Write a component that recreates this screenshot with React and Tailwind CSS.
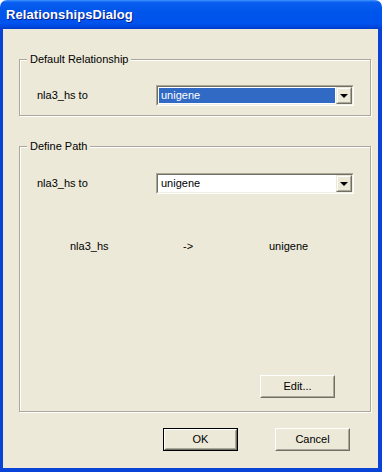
const font = "font-['Liberation_Sans',Arial,sans-serif]";

function Combo({ selected }) {
  return (
    <div className="w-[198px] h-[21px] border border-t-[#aca899] border-l-[#aca899] border-r-white border-b-white">
      <div className="h-full flex bg-white border border-t-[#716f64] border-l-[#716f64] border-r-[#f1efe2] border-b-[#f1efe2]">
        <div className="flex-1 p-px">
          <div
            className={`h-full flex items-center pl-[2px] text-[11px] leading-none ${
              selected ? 'bg-[#316ac5] text-white' : 'text-black'
            }`}
          >
            unigene
          </div>
        </div>
        <div className="w-[16px] h-full bg-[#ece9d8] border border-t-[#ece9d8] border-l-[#ece9d8] border-r-[#716f64] border-b-[#716f64]">
          <div className="h-full flex items-center justify-center border border-t-white border-l-white border-r-[#aca899] border-b-[#aca899]">
            <div className="w-0 h-0 border-l-[4px] border-r-[4px] border-t-[4px] border-l-transparent border-r-transparent border-t-black" />
          </div>
        </div>
      </div>
    </div>
  );
}

function Button({ children, isDefault }) {
  const face = (
    <div className="h-full flex items-center justify-center bg-[#ece9d8] border border-t-white border-l-white border-r-[#716f64] border-b-[#716f64] text-[11px] text-black">
      <div className="h-full w-full flex items-center justify-center border border-t-[#ece9d8] border-l-[#ece9d8] border-r-[#aca899] border-b-[#aca899]">
        {children}
      </div>
    </div>
  );
  if (isDefault) {
    return <div className="w-[75px] h-[23px] border border-black">{face}</div>;
  }
  return <div className="w-[75px] h-[23px]">{face}</div>;
}

function GroupBox({ title, height, children }) {
  return (
    <div
      className={`relative w-[352px] ${height} border border-[#aca899] shadow-[1px_1px_0_#fff,inset_1px_1px_0_#fff]`}
    >
      <div className="absolute left-[7px] top-[-7px] px-[3px] bg-[#ece9d8] text-[11px] leading-[13px] text-black">
        {title}
      </div>
      {children}
    </div>
  );
}

export default function App() {
  return (
    <div className={`w-[382px] h-[472px] flex flex-col ${font} select-none`}>
      {/* Title bar */}
      <div className="h-[29px] rounded-t-[7px] bg-[linear-gradient(to_bottom,#3d95ff_0%,#0a5ef0_8%,#0055ea_40%,#0053ee_80%,#0048de_92%,#003ac8_100%)] flex items-center pl-[6px]">
        <span className="text-[13px] font-bold text-white tracking-[0.1px] [text-shadow:1px_1px_0_#0a1e8a]">
          RelationshipsDialog
        </span>
      </div>

      {/* Window frame */}
      <div className="flex-1 flex flex-col bg-[#0842d6] pl-[3px] pr-[4px] pb-[4px]">
        <div className="flex-1 bg-[#ece9d8] pl-[16px] pt-[30px]">
          <GroupBox title="Default Relationship" height="h-[57px]">
            <div className="flex items-center pt-[25px] pl-[17px]">
              <span className="w-[119px] text-[11px] text-black">nla3_hs to</span>
              <Combo selected />
            </div>
          </GroupBox>

          <div className="h-[30px]" />

          <GroupBox title="Define Path" height="h-[266px]">
            <div className="flex items-center pt-[26px] pl-[17px]">
              <span className="w-[119px] text-[11px] text-black">nla3_hs to</span>
              <Combo />
            </div>
            <div className="flex items-center pt-[46px] text-[11px] text-black leading-[13px]">
              <span className="ml-[50px] w-[113px]">nla3_hs</span>
              <span className="w-[86px]">-&gt;</span>
              <span>unigene</span>
            </div>
            <div className="flex justify-end pr-[35px] pt-[122px]">
              <Button>Edit...</Button>
            </div>
          </GroupBox>

          <div className="flex gap-[37px] pl-[144px] pt-[16px]">
            <Button isDefault>OK</Button>
            <Button>Cancel</Button>
          </div>
        </div>
      </div>
    </div>
  );
}
